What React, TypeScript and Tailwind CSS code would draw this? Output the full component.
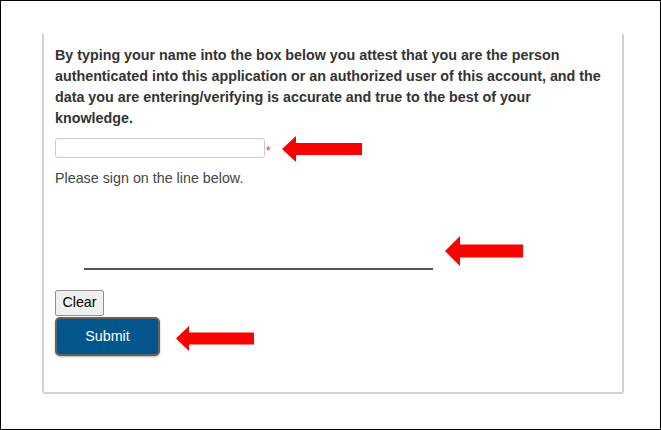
function Arrow({ w, h, t, l }: { w: number; h: number; t: number; l: number }) {
  const top = (h - t) / 2;
  const bot = (h + t) / 2;
  return (
    <svg width={w} height={h} viewBox={`0 0 ${w} ${h}`} className="block">
      <path d={`M0 ${h / 2} L${l} 0 L${l} ${top} L${w} ${top} L${w} ${bot} L${l} ${bot} L${l} ${h} Z`} fill="#ff0000" />
    </svg>
  );
}

export default function App() {
  return (
    <div className="relative box-border w-[661px] h-[430px] border border-black bg-white pt-[33px] pl-[41px] font-['Liberation_Sans',Arial,sans-serif] text-[14.3px]">
      <div className="box-border w-[582px] h-[360px] border-x-2 border-b-2 border-[#d2d2d2] rounded-b-[3px] pt-[11px] pl-[11px]">
        <p className="w-[549px] font-bold leading-[21px] text-[#333333]">
          By typing your name into the box below you attest that you are the person authenticated into this
          application or an authorized user of this account, and the data you are entering/verifying is accurate and
          true to the best of your knowledge.
        </p>

        <div className="mt-[9px] flex items-center">
          <input
            type="text"
            className="box-border w-[210px] h-[20px] rounded-[3px] border border-[#cccccc] bg-white outline-none"
          />
          <span className="ml-[1px] mt-[6px] text-[12px] leading-none text-[#e0304a]">*</span>
        </div>

        <p className="mt-[10px] leading-[21px] text-[#444444]">Please sign on the line below.</p>

        <div className="ml-[29px] w-[349px] h-[81px] border-b-2 border-[#555555]" />

        <div className="mt-[20px] flex flex-col items-start">
          <button className="box-border w-[49px] h-[26px] rounded-[2px] border border-[#8f8f8f] bg-[#efefef] text-[14.3px] text-black">
            Clear
          </button>
          <button className="box-border mt-[1px] w-[105px] h-[39px] rounded-[5px] border-2 border-[#5f6368] bg-[#02568c] text-[14.3px] text-white shadow-[0_1px_2px_rgba(0,0,0,0.3)]">
            Submit
          </button>
        </div>
      </div>

      <div className="absolute left-[281px] top-[135px]">
        <Arrow w={80} h={26} t={12} l={14} />
      </div>
      <div className="absolute left-[444px] top-[235px]">
        <Arrow w={78} h={30} t={13} l={15} />
      </div>
      <div className="absolute left-[175px] top-[325px]">
        <Arrow w={78} h={25} t={12} l={13} />
      </div>
    </div>
  );
}
